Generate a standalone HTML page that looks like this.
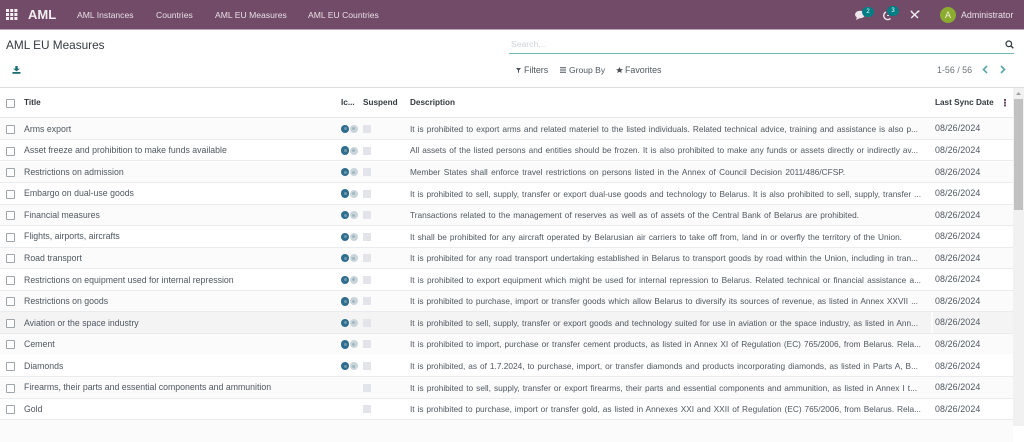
<!DOCTYPE html>
<html><head><meta charset="utf-8">
<style>
html,body{margin:0;padding:0;width:1024px;height:426px;overflow:hidden;background:#fff;font-family:"Liberation Sans",sans-serif;}
div,span,svg{position:absolute;}
.t{white-space:nowrap;line-height:12px;}
.nav{top:9px;color:#e9dfe6;font-size:8.6px;line-height:12px;white-space:nowrap;}
.r{left:0;width:1013px;height:21.55px;box-sizing:border-box;border-bottom:1px solid #e9ecef;}
.o{background:#fbfbfb;}
.cb{left:6px;top:6.6px;width:7px;height:7px;border:1px solid #a0a5aa;background:#fff;border-radius:1px;}
.ti{left:24px;top:4.3px;font-size:8.75px;color:#4f5760;white-space:nowrap;line-height:12px;}
.d{left:410px;top:4.5px;font-size:8.3px;color:#4f5760;white-space:normal;line-height:12px;text-align:justify;text-align-last:justify;height:12px;overflow:hidden;}
.dt{left:935px;top:4.1px;font-size:8.9px;color:#4f5760;white-space:nowrap;line-height:12px;letter-spacing:.1px;}
.s{left:363px;top:6.6px;width:8px;height:8px;background:#e2e4e9;}
.i1{left:341px;top:6.4px;width:8.4px;height:8.4px;border-radius:50%;background:#2f6d8f;}
.i1:after{content:"";position:absolute;left:2.7px;top:2.7px;width:3px;height:3px;border-radius:50%;background:#6d97ae;}
.i2{left:349.5px;top:6.6px;width:8px;height:8px;border-radius:50%;background:#c9d5db;}
.i2:after{content:"";position:absolute;left:2.5px;top:2.5px;width:3px;height:3px;border-radius:50%;background:#a3b7c2;}
.sep{width:2px;top:0;bottom:0;background:#fff;opacity:.7;}
.th{top:96.6px;font-size:8.2px;font-weight:bold;color:#343a40;white-space:nowrap;line-height:12px;}
</style></head>
<body>
<!-- navbar -->
<div style="left:0;top:0;width:1024px;height:30px;background:#714b67;border-bottom:1px solid #b9a8b4;box-sizing:border-box;"></div>
<svg style="left:6px;top:9px" width="12" height="12" viewBox="0 0 12 12" fill="#f3eef2"><rect x="0" y="0" width="3" height="3"/><rect x="4.2" y="0" width="3" height="3"/><rect x="8.4" y="0" width="3" height="3"/><rect x="0" y="4" width="3" height="3"/><rect x="4.2" y="4" width="3" height="3"/><rect x="8.4" y="4" width="3" height="3"/><rect x="0" y="8" width="3" height="3"/><rect x="4.2" y="8" width="3" height="3"/><rect x="8.4" y="8" width="3" height="3"/></svg>
<div class="t" style="left:28px;top:7px;font-size:13px;line-height:16px;color:#f3eef2;font-weight:bold;">AML</div>
<div class="nav" style="left:77px;">AML Instances</div>
<div class="nav" style="left:156px;">Countries</div>
<div class="nav" style="left:215px;">AML EU Measures</div>
<div class="nav" style="left:308px;">AML EU Countries</div>
<svg style="left:854px;top:9px" width="14" height="12" viewBox="0 0 14 12"><ellipse cx="6" cy="5.5" rx="5" ry="3.8" fill="#eee6ec"/><path d="M3 8l-1 3 4-2z" fill="#eee6ec"/></svg>
<div style="left:862px;top:7px;width:12px;height:10px;border-radius:5px;background:#017e84;color:#fff;font-size:6px;line-height:10px;text-align:center;">2</div>
<svg style="left:882px;top:9px" width="12" height="13" viewBox="0 0 12 13"><path d="M8.5 9.5A4 4 0 1 1 4 3" fill="none" stroke="#eee6ec" stroke-width="1.4"/><path d="M5 6.5h2" stroke="#eee6ec"/></svg>
<div style="left:887px;top:6px;width:12px;height:10px;border-radius:5px;background:#017e84;color:#fff;font-size:6px;line-height:10px;text-align:center;">3</div>
<svg style="left:910px;top:10px" width="10" height="9" viewBox="0 0 10 9"><path d="M1 1.2L8 8M8.6 1L1.2 8" stroke="#f3eef2" stroke-width="1.4"/><path d="M0.5 0.5l2 .3-.9 1.4zM6.8 1.2l2.4-1 .4 1.6-1.6.6z" fill="#f3eef2"/></svg>
<div style="left:940px;top:7px;width:16px;height:16px;border-radius:50%;background:#8cac2f;color:#f0f4e0;font-size:9px;line-height:16px;text-align:center;">A</div>
<div class="nav" style="left:961px;color:#e9dfe6;font-size:8.9px;">Administrator</div>

<!-- control panel -->
<div class="t" style="left:6px;top:37px;font-size:11.8px;line-height:16px;color:#343a40;">AML EU Measures</div>
<div class="t" style="left:511px;top:38px;font-size:8.6px;color:#cfd2d6;">Search...</div>
<div style="left:509px;top:53px;width:505px;height:1px;background:#6fb9bb;"></div>
<svg style="left:1005px;top:40px" width="9" height="9" viewBox="0 0 9 9"><circle cx="3.8" cy="3.8" r="2.8" fill="none" stroke="#343a40" stroke-width="1.2"/><path d="M5.8 5.8L8.3 8.3" stroke="#343a40" stroke-width="1.4"/></svg>
<svg style="left:12px;top:66px" width="9" height="8" viewBox="0 0 9 8"><path d="M3.3 0h2.4v2.6H8L4.5 5.4 1 2.6h2.3z" fill="#1d6f75"/><rect x="0.5" y="6" width="8" height="1.8" fill="#1d6f75"/></svg>
<svg style="left:516px;top:68px" width="5" height="5" viewBox="0 0 5 5"><path d="M0 0h5L3 2.4V5L2 4.4V2.4z" fill="#4a5058"/></svg>
<div class="t" style="left:524px;top:64px;font-size:8.9px;color:#4f5760;">Filters</div>
<svg style="left:560px;top:67px" width="6" height="6" viewBox="0 0 6 6"><path d="M0 .8h6M0 3h6M0 5.2h6" stroke="#4a5058"/></svg>
<div class="t" style="left:569px;top:64px;font-size:8.55px;color:#4f5760;">Group By</div>
<svg style="left:616px;top:67px" width="7" height="6" viewBox="0 0 7 6"><path d="M3.5 0l1 2.1 2.4.2-1.8 1.5.6 2.2-2.2-1.2-2.2 1.2.6-2.2L.1 2.3l2.4-.2z" fill="#4a5058"/></svg>
<div class="t" style="left:625px;top:64px;font-size:8.9px;color:#4f5760;">Favorites</div>
<div class="t" style="left:937px;top:64px;font-size:8.9px;color:#6b7278;">1-56 / 56</div>
<svg style="left:982px;top:65px" width="6" height="9" viewBox="0 0 6 9"><path d="M5 1L1.5 4.5 5 8" fill="none" stroke="#5aa6a9" stroke-width="1.6"/></svg>
<svg style="left:1000px;top:65px" width="6" height="9" viewBox="0 0 6 9"><path d="M1 1l3.5 3.5L1 8" fill="none" stroke="#5aa6a9" stroke-width="1.6"/></svg>

<!-- table header -->
<div style="left:0;top:87px;width:1024px;height:1px;background:#dcdcdc;"></div>
<div style="left:0;top:117px;width:1013px;height:2px;background:#e8e8e8;"></div>
<div class="cb" style="left:6px;top:99px;"></div>
<div class="th" style="left:24px;">Title</div>
<div class="th" style="left:341px;">Ic...</div>
<div class="th" style="left:363px;">Suspend</div>
<div class="th" style="left:410px;">Description</div>
<div class="th" style="left:935px;">Last Sync Date</div>
<div style="left:1004px;top:99px;width:2px;height:2px;background:#6b4a63;box-shadow:0 2.7px 0 #6b4a63,0 5.4px 0 #6b4a63;"></div>

<!-- rows -->
<div class="r o" style="top:118.4px"><div class="cb"></div><div class="ti">Arms export</div><div class="i1"></div><div class="i2"></div><div class="s"></div><div class="d" style="width:508px">It is prohibited to export arms and related materiel to the listed individuals. Related technical advice, training and assistance is also p...</div><div class="dt">08/26/2024</div></div>
<div class="r" style="top:139.95px"><div class="cb"></div><div class="ti">Asset freeze and prohibition to make funds available</div><div class="i1"></div><div class="i2"></div><div class="s"></div><div class="d" style="width:508px">All assets of the listed persons and entities should be frozen. It is also prohibited to make any funds or assets directly or indirectly av...</div><div class="dt">08/26/2024</div></div>
<div class="r o" style="top:161.5px"><div class="cb"></div><div class="ti">Restrictions on admission</div><div class="i1"></div><div class="i2"></div><div class="s"></div><div class="d" style="width:435px">Member States shall enforce travel restrictions on persons listed in the Annex of Council Decision 2011/486/CFSP.</div><div class="dt">08/26/2024</div></div>
<div class="r" style="top:183.05px"><div class="cb"></div><div class="ti">Embargo on dual-use goods</div><div class="i1"></div><div class="i2"></div><div class="s"></div><div class="d" style="width:511px">It is prohibited to sell, supply, transfer or export dual-use goods and technology to Belarus. It is also prohibited to sell, supply, transfer ...</div><div class="dt">08/26/2024</div></div>
<div class="r o" style="top:204.6px"><div class="cb"></div><div class="ti">Financial measures</div><div class="i1"></div><div class="i2"></div><div class="s"></div><div class="d" style="width:449px">Transactions related to the management of reserves as well as of assets of the Central Bank of Belarus are prohibited.</div><div class="dt">08/26/2024</div></div>
<div class="r" style="top:226.15px"><div class="cb"></div><div class="ti">Flights, airports, aircrafts</div><div class="i1"></div><div class="i2"></div><div class="s"></div><div class="d" style="width:492px">It shall be prohibited for any aircraft operated by Belarusian air carriers to take off from, land in or overfly the territory of the Union.</div><div class="dt">08/26/2024</div></div>
<div class="r o" style="top:247.7px"><div class="cb"></div><div class="ti">Road transport</div><div class="i1"></div><div class="i2"></div><div class="s"></div><div class="d" style="width:508px">It is prohibited for any road transport undertaking established in Belarus to transport goods by road within the Union, including in tran...</div><div class="dt">08/26/2024</div></div>
<div class="r" style="top:269.25px"><div class="cb"></div><div class="ti">Restrictions on equipment used for internal repression</div><div class="i1"></div><div class="i2"></div><div class="s"></div><div class="d" style="width:511px">It is prohibited to export equipment which might be used for internal repression to Belarus. Related technical or financial assistance a...</div><div class="dt">08/26/2024</div></div>
<div class="r o" style="top:290.8px"><div class="cb"></div><div class="ti">Restrictions on goods</div><div class="i1"></div><div class="i2"></div><div class="s"></div><div class="d" style="width:508px">It is prohibited to purchase, import or transfer goods which allow Belarus to diversify its sources of revenue, as listed in Annex XXVII ...</div><div class="dt">08/26/2024</div></div>
<div class="r" style="top:312.35px;background:#f4f4f4"><div class="cb"></div><div class="ti">Aviation or the space industry</div><div class="i1"></div><div class="i2"></div><div class="s"></div><div class="d" style="width:508px">It is prohibited to sell, supply, transfer or export goods and technology suited for use in aviation or the space industry, as listed in Ann...</div><div class="dt">08/26/2024</div><div class="sep" style="left:931px"></div></div>
<div class="r o" style="top:333.9px;border-bottom:0"><div class="cb"></div><div class="ti">Cement</div><div class="i1"></div><div class="i2"></div><div class="s"></div><div class="d" style="width:511px">It is prohibited to import, purchase or transfer cement products, as listed in Annex XI of Regulation (EC) 765/2006, from Belarus. Rela...</div><div class="dt">08/26/2024</div></div>
<div class="r" style="top:355.45px"><div class="cb"></div><div class="ti">Diamonds</div><div class="i1"></div><div class="i2"></div><div class="s"></div><div class="d" style="width:508px">It is prohibited, as of 1.7.2024, to purchase, import, or transfer diamonds and products incorporating diamonds, as listed in Parts A, B...</div><div class="dt">08/26/2024</div></div>
<div class="r o" style="top:377px"><div class="cb"></div><div class="ti">Firearms, their parts and essential components and ammunition</div><div class="s"></div><div class="d" style="width:507px">It is prohibited to sell, supply, transfer or export firearms, their parts and essential components and ammunition, as listed in Annex I t...</div><div class="dt">08/26/2024</div></div>
<div class="r" style="top:398.55px"><div class="cb"></div><div class="ti">Gold</div><div class="s"></div><div class="d" style="width:511px">It is prohibited to purchase, import or transfer gold, as listed in Annexes XXI and XXII of Regulation (EC) 765/2006, from Belarus. Rela...</div><div class="dt">08/26/2024</div></div>
<div class="r o" style="top:420.1px;border-bottom:0"></div>

<!-- scrollbar -->
<div style="left:1013px;top:88px;width:11px;height:338px;background:#f1f1f1;"></div>
<div style="left:1014px;top:99px;width:9px;height:111px;background:#c1c1c1;"></div>
<svg style="left:1015px;top:91px" width="7" height="5" viewBox="0 0 7 5"><path d="M3.5 1L6 4H1z" fill="#a0a0a0"/></svg>
</body></html>
